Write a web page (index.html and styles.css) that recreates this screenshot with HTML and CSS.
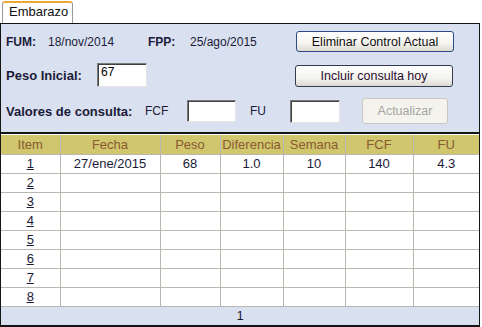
FILE: index.html
```html
<!DOCTYPE html>
<html>
<head>
<meta charset="utf-8">
<link rel="stylesheet" href="styles.css">
</head>
<body>
<div class="tabbar"><div class="tab">Embarazo</div></div>
<div class="frame">
  <div class="panel">
    <div class="row row1">
      <span class="lbl w-fum">FUM:</span>
      <span class="val w-fumv">18/nov/2014</span>
      <span class="lbl w-fpp">FPP:</span>
      <span class="val w-fppv">25/ago/2015</span>
      <button class="btn btn-wide">Eliminar Control Actual</button>
    </div>
    <div class="row row2">
      <span class="lbl lbl-lg w-peso">Peso Inicial:</span>
      <input class="inp inp-peso" type="text" value="67">
      <button class="btn btn-wide btn-incl">Incluir consulta hoy</button>
    </div>
    <div class="row row3">
      <span class="lbl lbl-lg w-valores">Valores de consulta:</span>
      <span class="val w-fcf">FCF</span>
      <input class="inp inp-sm" type="text">
      <span class="val w-fu">FU</span>
      <input class="inp inp-fu" type="text">
      <button class="btn btn-dis" disabled>Actualizar</button>
    </div>
  </div>
  <table class="grid">
    <colgroup>
      <col class="c-item"><col class="c-fecha"><col class="c-peso"><col class="c-dif"><col class="c-sem"><col class="c-fcf"><col class="c-fu">
    </colgroup>
    <thead>
      <tr><th>Item</th><th>Fecha</th><th>Peso</th><th>Diferencia</th><th>Semana</th><th>FCF</th><th>FU</th></tr>
    </thead>
    <tbody>
      <tr><td><a href="#">1</a></td><td>27/ene/2015</td><td>68</td><td>1.0</td><td>10</td><td>140</td><td>4.3</td></tr>
      <tr><td><a href="#">2</a></td><td></td><td></td><td></td><td></td><td></td><td></td></tr>
      <tr><td><a href="#">3</a></td><td></td><td></td><td></td><td></td><td></td><td></td></tr>
      <tr><td><a href="#">4</a></td><td></td><td></td><td></td><td></td><td></td><td></td></tr>
      <tr><td><a href="#">5</a></td><td></td><td></td><td></td><td></td><td></td><td></td></tr>
      <tr><td><a href="#">6</a></td><td></td><td></td><td></td><td></td><td></td><td></td></tr>
      <tr><td><a href="#">7</a></td><td></td><td></td><td></td><td></td><td></td><td></td></tr>
      <tr><td><a href="#">8</a></td><td></td><td></td><td></td><td></td><td></td><td></td></tr>
    </tbody>
    <tfoot>
      <tr><td colspan="7" class="pager">1</td></tr>
    </tfoot>
  </table>
</div>
</body>
</html>
```
FILE: styles.css
```css
* { box-sizing: border-box; }
html, body { margin: 0; padding: 0; background: #ffffff; }
body {
  font-family: "Liberation Sans", Arial, sans-serif;
  font-size: 12px;
  color: #1b1b38;
  width: 482px;
  height: 327px;
  overflow: hidden;
}
.tabbar {
  height: 23px;
  padding-left: 2px;
  padding-top: 1px;
  display: flex;
  align-items: flex-end;
}
.tab {
  width: 71px;
  height: 22px;
  background: #ffffff;
  border: 1px solid #9a9a9a;
  border-top: 2px solid #eba83a;
  border-bottom: none;
  border-radius: 3px 3px 0 0;
  font-size: 13px;
  color: #111;
  padding-left: 6px;
  line-height: 18px;
}
.frame {
  width: 480px;
  border: 1px solid #141414;
  border-bottom-width: 2px;
}
.panel {
  background: #d9e1f0;
  padding: 7px 0 0 5px;
  height: 110px;
  border-bottom: 2px solid #141414;
}
.row { display: flex; align-items: center; }
.row1 { height: 21px; }
.row2 { height: 24px; margin-top: 11px; }
.row3 { height: 26px; margin-top: 11px; }
.lbl { font-weight: bold; color: #1b1b38; white-space: nowrap; }
.lbl-lg { font-size: 13px; }
.val { color: #1b1b38; white-space: nowrap; }
.w-fum { width: 42px; }
.w-fumv { width: 100px; }
.w-fpp { width: 42px; }
.w-fppv { width: 106px; }
.w-peso { width: 91px; }
.w-valores { width: 139px; }
.w-fcf { width: 42px; }
.w-fu { width: 40px; margin-left: 14px; }
.inp {
  font-family: "Liberation Sans", Arial, sans-serif;
  font-size: 12px;
  color: #000;
  background: #fff;
  border: 1px solid;
  border-color: #7a7a7a #e4e4e4 #e4e4e4 #7a7a7a;
  box-shadow: inset 1px 1px 0 #404040;
  padding: 0 0 0 3px;
  margin: 0;
  outline: none;
}
.inp-peso { width: 50px; height: 24px; padding-bottom: 6px; }
.inp-sm { width: 49px; height: 22px; }
.inp-fu { width: 50px; height: 23px; }
.btn {
  font-family: "Liberation Sans", Arial, sans-serif;
  font-size: 12.5px;
  color: #111;
  margin: 0;
  padding: 0;
  border-radius: 3px;
  cursor: default;
}
.btn-wide {
  width: 158px;
  height: 21px;
  border: 1px solid #2c4a86;
  background: linear-gradient(#ffffff, #f4f3ef 60%, #dcdad0);
}
.btn-incl {
  margin-left: 148px;
  height: 22px;
  margin-top: 1px;
  border-color: #333b52;
  color: #2a0f30;
}
.btn-dis {
  width: 86px;
  height: 26px;
  margin-left: 22px;
  border: 1px solid #cac8bc;
  background: #f4f3ee;
  color: #a5a5a0;
}
.grid {
  width: 478px;
  border-collapse: collapse;
  table-layout: fixed;
  margin-top: 1px;
  font-size: 13px;
}
.c-item { width: 59px; }
.c-fecha { width: 100px; }
.c-peso { width: 60px; }
.c-dif { width: 63px; }
.c-sem { width: 62px; }
.c-fcf { width: 68px; }
.c-fu { width: 66px; }
.grid th, .grid td {
  height: 19px;
  padding: 0;
  text-align: center;
  font-weight: normal;
  border: 1px solid #b8b8b0;
  line-height: 17px;
  white-space: nowrap;
}
.grid thead th {
  background: #cfc66e;
  color: #8a5a30;
  border-top: none;
}
.grid tr > :first-child { border-left: none; }
.grid tr > :last-child { border-right: none; }
.grid td { color: #1b1b38; background: #fff; }
.grid td a { color: #1b1b38; text-decoration: underline; }
.grid td.pager {
  background: #d9e1f0;
  border-bottom: none;
}
```
